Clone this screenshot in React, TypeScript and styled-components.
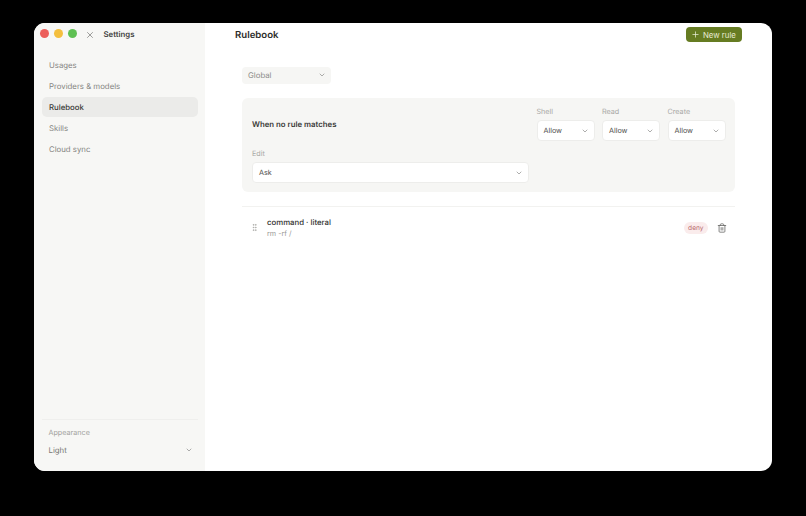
import { ChevronDown, Plus, Trash2, X, GripVertical } from 'lucide-react';
import styled, { createGlobalStyle } from 'styled-components';

const GlobalStyle = createGlobalStyle`
    html, body {
        margin: 0;
        padding: 0;
        background: #000;
    }
    body {
        font-family: Inter, "Liberation Sans", sans-serif;
        text-rendering: geometricPrecision;
        -webkit-font-smoothing: antialiased;
    }
`;

const NAV_ITEMS = ['Usages', 'Providers & models', 'Rulebook', 'Skills', 'Cloud sync'];

const Stage = styled.div`
    width: 806px;
    height: 516px;
    padding: 23px 34px 45px;
    box-sizing: border-box;
    overflow: hidden;
`;

const Window = styled.div`
    display: flex;
    height: 448px;
    border-radius: 11px;
    overflow: hidden;
    background: #fff;
`;

const Sidebar = styled.aside`
    display: flex;
    flex-direction: column;
    width: 171px;
    flex-shrink: 0;
    padding: 0 7px 0 8px;
    box-sizing: border-box;
    background: #f7f7f5;
`;

const TitleBar = styled.div`
    display: flex;
    align-items: center;
    height: 22px;
    margin-left: -2.5px;
    margin-bottom: 9px;
`;

const Light = styled.span<{ $color: string }>`
    width: 9px;
    height: 9px;
    margin-right: 5px;
    margin-top: -2px;
    border-radius: 50%;
    background: ${(p) => p.$color};
`;

const CloseIcon = styled(X)`
    width: 10px;
    height: 10px;
    margin-left: 3.5px;
    margin-top: 1px;
    color: #8a8a88;
`;

const WindowTitle = styled.span`
    margin-left: 8.5px;
    font-size: 7.8px;
    font-weight: 600;
    color: #444442;
`;

const Nav = styled.nav`
    display: flex;
    flex-direction: column;
    gap: 1px;
    margin-top: 1px;
`;

const NavItem = styled.div<{ $active?: boolean }>`
    height: 20px;
    padding: 0 7px;
    border-radius: 5px;
    font-size: 7.8px;
    line-height: 20px;
    font-weight: ${(p) => (p.$active ? 500 : 400)};
    color: ${(p) => (p.$active ? '#3a3a38' : '#858582')};
    background: ${(p) => (p.$active ? '#ebebe9' : 'transparent')};
`;

const Appearance = styled.div`
    margin-top: auto;
    padding: 8px 5px 11px 6.5px;
    border-top: 1px solid #efefed;
`;

const AppearanceLabel = styled.div`
    font-size: 7.2px;
    line-height: 10px;
    color: #a3a3a0;
`;

const AppearanceRow = styled.div`
    display: flex;
    align-items: center;
    justify-content: space-between;
    height: 20px;
    margin-top: 2px;
    font-size: 7.8px;
    color: #777774;
`;

const Main = styled.main`
    flex: 1;
    min-width: 0;
    display: flex;
    flex-direction: column;
`;

const Header = styled.header`
    display: flex;
    align-items: center;
    justify-content: space-between;
    height: 23px;
    padding: 0 30px;
`;

const PageTitle = styled.h1`
    margin: 0;
    padding-top: 1px;
    font-size: 9.6px;
    font-weight: 600;
    color: #2c2c2a;
`;

const NewRule = styled.button`
    display: flex;
    align-items: center;
    gap: 3px;
    width: 56px;
    height: 15px;
    padding: 0 0 0 5px;
    border: 0;
    border-radius: 4px;
    font-family: inherit;
    font-size: 7.8px;
    font-weight: 400;
    color: #e6ebd3;
    background: #667c22;
`;

const Content = styled.div`
    padding: 21px 37px 0;
`;

const ScopeSelect = styled.div`
    display: flex;
    align-items: center;
    justify-content: space-between;
    width: 89px;
    height: 17px;
    padding: 0 5px 1px 6px;
    box-sizing: border-box;
    border-radius: 4px;
    font-size: 7.8px;
    color: #8b8b88;
    background: #f6f6f4;
`;

const Panel = styled.section`
    display: grid;
    grid-template-columns: 277px 58px 58px 58px;
    column-gap: 7.5px;
    row-gap: 8px;
    margin-top: 14px;
    padding: 9px 10px 8.5px;
    border-radius: 6px;
    background: #f6f6f4;
`;

const PanelTitle = styled.div`
    align-self: center;
    font-size: 7.8px;
    font-weight: 600;
    color: #3a3a38;
`;

const Field = styled.div`
    display: flex;
    flex-direction: column;
    gap: 3px;
`;

const FieldLabel = styled.span`
    font-size: 7.2px;
    line-height: 10px;
    color: #a8a8a5;
`;

const Select = styled.div`
    display: flex;
    align-items: center;
    justify-content: space-between;
    height: 21px;
    padding: 0 5px 0 6px;
    box-sizing: border-box;
    border: 1px solid #ededeb;
    border-radius: 4px;
    font-size: 7.2px;
    font-weight: 400;
    color: #50504e;
    background: #fff;
`;

const Chevron = styled(ChevronDown)`
    width: 8px;
    height: 8px;
    color: #858583;
`;

const RuleRow = styled.div`
    display: flex;
    align-items: center;
    margin-top: 14px;
    padding: 10px 8px 0 8px;
    border-top: 1px solid #f2f2f0;
`;

const Grip = styled(GripVertical)`
    width: 9px;
    height: 9px;
    color: #a9a9a6;
`;

const RuleText = styled.div`
    flex: 1;
    margin-left: 8px;
`;

const RuleName = styled.div`
    font-size: 7.8px;
    line-height: 11px;
    font-weight: 500;
    color: #333331;
`;

const RulePattern = styled.div`
    font-size: 7.2px;
    line-height: 11px;
    color: #9a9a97;
`;

const Badge = styled.span`
    height: 12px;
    padding: 0 4.5px;
    border-radius: 6px;
    font-size: 6.6px;
    line-height: 12px;
    color: #bb6f70;
    background: #faecec;
`;

const TrashIcon = styled(Trash2)`
    width: 10px;
    height: 10px;
    margin-left: 9px;
    color: #6c6c6a;
`;

const SelectField = ({ label, value }: { label: string; value: string }) => (
    <Field>
        <FieldLabel>{label}</FieldLabel>
        <Select>
            {value}
            <Chevron />
        </Select>
    </Field>
);

const App = () => {
    return (
        <Stage>
            <GlobalStyle />
            <Window>
                <Sidebar>
                    <TitleBar>
                        <Light $color="#ec5f5b" />
                        <Light $color="#f4bf3e" />
                        <Light $color="#5fc053" />
                        <CloseIcon />
                        <WindowTitle>Settings</WindowTitle>
                    </TitleBar>
                    <Nav>
                        {NAV_ITEMS.map((item) => (
                            <NavItem key={item} $active={item === 'Rulebook'}>
                                {item}
                            </NavItem>
                        ))}
                    </Nav>
                    <Appearance>
                        <AppearanceLabel>Appearance</AppearanceLabel>
                        <AppearanceRow>
                            Light
                            <Chevron />
                        </AppearanceRow>
                    </Appearance>
                </Sidebar>
                <Main>
                    <Header>
                        <PageTitle>Rulebook</PageTitle>
                        <NewRule>
                            <Plus size={9} />
                            New rule
                        </NewRule>
                    </Header>
                    <Content>
                        <ScopeSelect>
                            Global
                            <Chevron />
                        </ScopeSelect>
                        <Panel>
                            <PanelTitle>When no rule matches</PanelTitle>
                            <SelectField label="Shell" value="Allow" />
                            <SelectField label="Read" value="Allow" />
                            <SelectField label="Create" value="Allow" />
                            <SelectField label="Edit" value="Ask" />
                        </Panel>
                        <RuleRow>
                            <Grip />
                            <RuleText>
                                <RuleName>command · literal</RuleName>
                                <RulePattern>rm -rf /</RulePattern>
                            </RuleText>
                            <Badge>deny</Badge>
                            <TrashIcon />
                        </RuleRow>
                    </Content>
                </Main>
            </Window>
        </Stage>
    );
};

export default App;
